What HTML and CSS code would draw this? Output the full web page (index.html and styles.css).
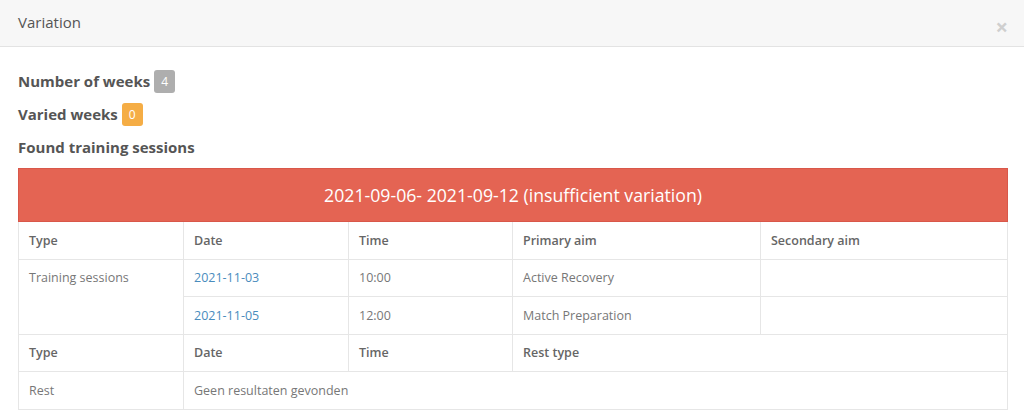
FILE: index.html
```html
<!DOCTYPE html>
<html>
<head>
<meta charset="utf-8">
<link rel="stylesheet" href="styles.css">
</head>
<body>
<div class="modal">
  <div class="modal-header">
    <span class="title">Variation</span>
    <span class="close">×</span>
  </div>
  <div class="modal-body">
    <div class="stat">Number of weeks <span class="badge badge-grey">4</span></div>
    <div class="stat">Varied weeks <span class="badge badge-orange">0</span></div>
    <div class="stat">Found training sessions</div>
    <table class="results">
      <colgroup>
        <col class="c1"><col class="c2"><col class="c3"><col class="c4"><col class="c5">
      </colgroup>
      <tr><th colspan="5" class="week">2021-09-06- 2021-09-12 (insufficient variation)</th></tr>
      <tr class="head"><td>Type</td><td>Date</td><td>Time</td><td>Primary aim</td><td>Secondary aim</td></tr>
      <tr><td rowspan="2" class="top">Training sessions</td><td><a>2021-11-03</a></td><td>10:00</td><td>Active Recovery</td><td></td></tr>
      <tr><td><a>2021-11-05</a></td><td>12:00</td><td>Match Preparation</td><td></td></tr>
      <tr class="head"><td>Type</td><td>Date</td><td>Time</td><td colspan="2">Rest type</td></tr>
      <tr><td>Rest</td><td colspan="4">Geen resultaten gevonden</td></tr>
    </table>
  </div>
</div>
</body>
</html>
```

FILE: styles.css
```css
* { box-sizing: border-box; }
html, body { margin: 0; padding: 0; background: #fff; }
body { font-family: "Open Sans", "Liberation Sans", sans-serif; color: #666; }

.modal-header {
  height: 47px;
  background: #f7f7f7;
  border-bottom: 1px solid #e3e3e3;
  display: flex;
  align-items: center;
  justify-content: space-between;
  padding: 0 18px 3px 18px;
}
.title { font-size: 15px; color: #555; }
.close { font-size: 22px; font-weight: bold; color: #cfcfcf; line-height: 1; margin-top: 8px; margin-right: -2px; }

.modal-body { padding: 23px 17px 0 18px; }
.stat {
  font-size: 15px; font-weight: 700; color: #555;
  height: 23px; line-height: 23px;
  margin-bottom: 10px;
  display: flex; align-items: center; gap: 4px;
}
.stat:last-of-type { margin-bottom: 9px; }
.badge {
  display: inline-flex; align-items: center; justify-content: center;
  width: 21px; height: 23px; border-radius: 3px;
  color: #fff; font-size: 12px; font-weight: 400;
}
.badge-grey { background: #aeaeae; }
.badge-orange { background: #f5ad45; }

.results { width: 989px; border-collapse: collapse; table-layout: fixed; font-size: 12.5px; }
.c1 { width: 165px; } .c2 { width: 165px; } .c3 { width: 164px; } .c4 { width: 248px; } .c5 { width: 247px; }
.results td { border: 1px solid #e6e6e6; height: 37.5px; padding: 0 10px; vertical-align: middle; color: #777; }
.results td.top { vertical-align: top; padding-top: 9px; }
.results .head td { font-weight: 600; color: #666; }
.results th.week {
  background: #e46453; border: 1px solid #d9574a; color: #fff;
  font-size: 17.7px; font-weight: 400; height: 53px;
}
.results a { color: #4a8cbd; }
```
